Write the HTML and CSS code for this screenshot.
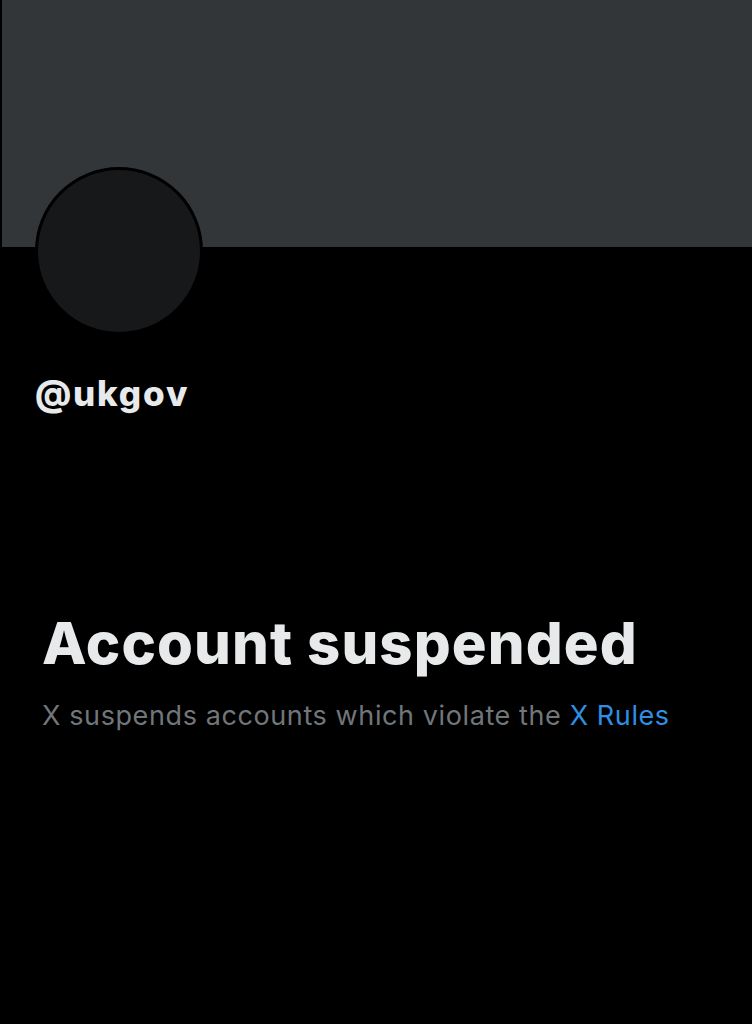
FILE: index.html
```html
<!DOCTYPE html>
<html lang="en">
<head>
<meta charset="utf-8">
<title>@ukgov</title>
<link rel="stylesheet" href="styles.css">
</head>
<body>
<div class="page">
  <div class="banner"></div>
  <div class="profile">
    <div class="avatar"></div>
    <div class="handle">@ukgov</div>
  </div>
  <div class="notice">
    <h1 class="title">Account suspended</h1>
    <p class="desc">X suspends accounts which violate the <a class="link" href="#">X Rules</a></p>
  </div>
</div>
</body>
</html>
```
FILE: styles.css
```css
html, body {
  margin: 0;
  padding: 0;
  background: #000;
}
.page {
  width: 752px;
  height: 1024px;
  background: #000;
  font-family: Inter, "Noto Sans", sans-serif;
  overflow: hidden;
}
.banner {
  height: 247px;
  background: #333639;
  margin-left: 2px;
}
.profile {
  padding-left: 35px;
}
.avatar {
  width: 162px;
  height: 162px;
  border-radius: 50%;
  background: #16181a;
  border: 3px solid #000;
  margin-top: -80px;
  box-sizing: content-box;
}
.handle {
  margin-top: 38px;
  color: #e7e9ea;
  font-size: 35px;
  font-weight: 800;
  line-height: 40px;
  letter-spacing: 1.8px;
}
.notice {
  padding-left: 42px;
  margin-top: 195px;
}
.title {
  margin: 0;
  color: #e7e9ea;
  font-size: 58px;
  font-weight: 800;
  line-height: 70px;
  letter-spacing: 1.1px;
}
.desc {
  margin: 20px 0 0;
  color: #71767b;
  font-size: 27px;
  font-weight: 400;
  line-height: 36px;
  letter-spacing: 0.6px;
}
.link {
  color: #2f8fe3;
  text-decoration: none;
}
```
